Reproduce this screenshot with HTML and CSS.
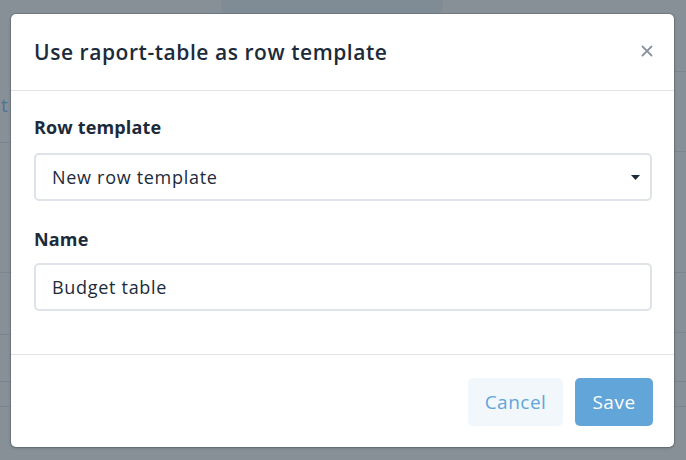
FILE: index.html
```html
<!DOCTYPE html>
<html>
<head>
<meta charset="utf-8">
<link rel="stylesheet" href="styles.css">
</head>
<body>
<div class="page">
  <div class="topbar"><div class="topbox"></div></div>
  <div class="cols">
    <div class="col col-left">
      <div class="row r-l1"></div>
      <div class="row r-l2"><span class="peek">t</span></div>
      <div class="row r-l3"></div>
      <div class="row r-l4"></div>
      <div class="row r-l5"></div>
      <div class="row r-l6"></div>
    </div>
    <div class="col col-right">
      <div class="row r-r0"></div>
      <div class="row r-r1"></div>
      <div class="row r-r2"></div>
      <div class="row r-r3"></div>
      <div class="row r-r4"></div>
      <div class="row r-r5"></div>
    </div>
  </div>
</div>

<div class="overlay">
  <div class="modal">
    <div class="modal-header">
      <h2 class="modal-title">Use raport-table as row template</h2>
      <button class="close" aria-label="Close">
        <svg width="12" height="12" viewBox="0 0 12 12"><path d="M1.5 1.5 L10.5 10.5 M10.5 1.5 L1.5 10.5" stroke="#8a949e" stroke-width="1.8" stroke-linecap="round"/></svg>
      </button>
    </div>
    <div class="modal-body">
      <div class="field">
        <label class="label">Row template</label>
        <div class="select">
          <span>New row template</span>
          <svg class="caret" width="9" height="5" viewBox="0 0 9 5"><path d="M0 0 H9 L4.5 5 Z" fill="#1c2b3a"/></svg>
        </div>
      </div>
      <div class="field field-name">
        <label class="label">Name</label>
        <div class="input">Budget table</div>
      </div>
    </div>
    <div class="modal-footer">
      <button class="btn btn-cancel">Cancel</button>
      <button class="btn btn-save">Save</button>
    </div>
  </div>
</div>
</body>
</html>
```

FILE: styles.css
```css
* { box-sizing: border-box; }
html, body { margin: 0; padding: 0; }
body {
  width: 686px;
  height: 460px;
  overflow: hidden;
  background: #878f97;
  font-family: "Open Sans", "Noto Sans", sans-serif;
  position: relative;
}
.page { width: 686px; height: 460px; }
.topbar { height: 14px; display: flex; }
.topbox {
  margin-left: 221px;
  width: 222px;
  height: 13px;
  background: #7f8c96;
  border-radius: 0 0 6px 6px;
}
.cols { display: flex; justify-content: space-between; }
.col { width: 120px; display: flex; flex-direction: column; }
.row { border-bottom: 1px solid #7c858d; }
.r-l1 { height: 129px; }
.r-l2 { height: 0; border: 0; }
.r-l3 { height: 130px; }
.r-l4 { height: 62px; }
.r-l5 { height: 47px; }
.r-l6 { height: 25px; }
.peek {
  position: absolute;
  left: 1px;
  top: 92px;
  color: #4d7396;
  font-size: 19px;
}
.r-r0 { height: 58px; }
.r-r1 { height: 80px; }
.r-r2 { height: 121px; }
.r-r3 { height: 60px; }
.r-r4 { height: 49px; }
.r-r5 { height: 25px; }

.overlay {
  position: absolute;
  inset: 0;
  padding: 14px 0 0 11px;
}
.modal {
  width: 663px;
  height: 433px;
  background: #fff;
  border-radius: 5px;
  box-shadow: 0 0 0 1px rgba(60, 70, 80, 0.25), 0 1px 3px rgba(40, 50, 60, 0.3);
  display: flex;
  flex-direction: column;
}
.modal-header {
  height: 77px;
  border-bottom: 1px solid #dfe4e8;
  display: flex;
  align-items: center;
  justify-content: space-between;
  padding: 0 21px 0 23px;
}
.modal-title {
  margin: 0;
  font-size: 21px;
  font-weight: 600;
  letter-spacing: 0.55px;
  color: #1c2b3a;
}
.close {
  border: 0;
  background: none;
  padding: 0;
  width: 12px;
  height: 12px;
  display: flex;
  margin-top: -3px;
}
.modal-body {
  padding: 24px 22px 0 23px;
  height: 264px;
  border-bottom: 1px solid #dfe4e8;
}
.field { display: flex; flex-direction: column; }
.field-name { margin-top: 26px; }
.label {
  font-size: 18px;
  font-weight: 700;
  letter-spacing: 0.15px;
  color: #1c2b3a;
  line-height: 24px;
  margin-bottom: 14px;
}
.field-name .label { margin-bottom: 12px; }
.select, .input {
  height: 48px;
  border: 2px solid #dde3e8;
  border-radius: 5px;
  display: flex;
  align-items: center;
  padding: 0 10px 0 16px;
  font-size: 18px;
  letter-spacing: 0.7px;
  color: #1c2b3a;
}
.select { justify-content: space-between; }
.caret { margin-top: 1px; }
.modal-footer {
  flex: 1;
  display: flex;
  justify-content: flex-end;
  align-items: flex-start;
  padding: 23px 21px 0 0;
  gap: 12px;
}
.btn {
  height: 48px;
  border: 0;
  border-radius: 5px;
  font-family: "Open Sans", "Noto Sans", sans-serif;
  font-size: 19px;
  letter-spacing: 0.5px;
  padding: 0;
}
.btn-cancel { background: #f2f7fc; color: #62a5d9; width: 95px; }
.btn-save { background: #62a5d9; color: #fff; width: 78px; }
```
